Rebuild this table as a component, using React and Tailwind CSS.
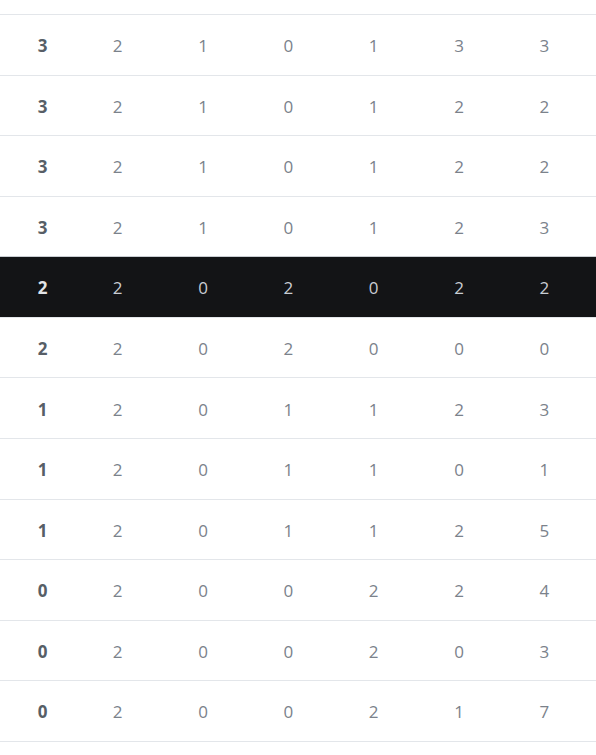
import React from "react";

const rows = [
  [3, 2, 1, 0, 1, 3, 3],
  [3, 2, 1, 0, 1, 2, 2],
  [3, 2, 1, 0, 1, 2, 2],
  [3, 2, 1, 0, 1, 2, 3],
  [2, 2, 0, 2, 0, 2, 2],
  [2, 2, 0, 2, 0, 0, 0],
  [1, 2, 0, 1, 1, 2, 3],
  [1, 2, 0, 1, 1, 0, 1],
  [1, 2, 0, 1, 1, 2, 5],
  [0, 2, 0, 0, 2, 2, 4],
  [0, 2, 0, 0, 2, 0, 3],
  [0, 2, 0, 0, 2, 1, 7],
];

export default function App() {
  return (
    <div
      className="w-[596px] h-[755px] bg-white overflow-hidden pt-[14px]"
      style={{ fontFamily: '"Open Sans", "Noto Sans", sans-serif' }}
    >
      <div className="border-b border-[#e3e6ea]">
        {rows.map((r, i) => {
          const dark = i === 4;
          return (
            <div
              key={i}
              className={
                "grid grid-cols-[75px_repeat(6,1fr)] pr-[9px] h-[60.58px] items-center border-t text-[17px] " +
                (dark
                  ? "bg-[#131416] border-[#c9cdd2] text-[#c9cdd3]"
                  : "bg-white border-[#e3e6ea] text-[#7b828b]")
              }
            >
              {r.map((v, j) => (
                <div
                  key={j}
                  className={
                    "text-center pt-[2px] " +
                    (j === 0
                      ? "pl-[10px] font-bold " + (dark ? "text-[#e2e4e7]" : "text-[#575e66]")
                      : "")
                  }
                >
                  {v}
                </div>
              ))}
            </div>
          );
        })}
      </div>
    </div>
  );
}
